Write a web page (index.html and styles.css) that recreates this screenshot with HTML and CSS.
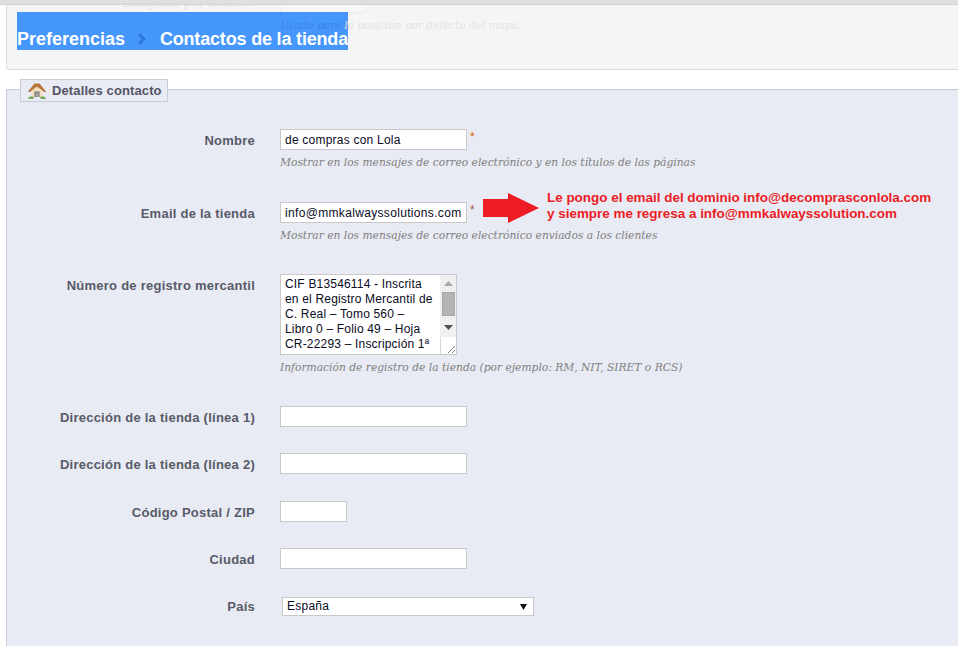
FILE: index.html
```html
<!DOCTYPE html>
<html lang="es">
<head>
<meta charset="utf-8">
<title>Contactos de la tienda</title>
<link rel="stylesheet" href="styles.css">
</head>
<body>
<div class="topstrip"></div>
<header class="head">
  <div class="ghost ghost-a">Longitud por defecto</div>
  <div class="ghost-box"></div>
  <h1 class="crumbs"><span>Preferencias</span><svg class="sep" width="12" height="14" viewBox="0 0 12 14"><path d="M3 2l5 5-5 5" fill="none" stroke="#2f78dc" stroke-width="3"/></svg><span class="crumb-last">Contactos de la tienda</span></h1>
  <div class="ghost ghost-b"><span class="ghost-on">Usado para</span> la posición por defecto del mapa.</div>
</header>
<section class="panel">
  <div class="legend">
    <svg class="home" width="18" height="16" viewBox="0 0 18 16">
      <path d="M3.500 7.500V14h11V7.500L9 3z" fill="#f1dfc0"/>
      <path d="M6.500 8.500h5V14h-5z" fill="#6f6f6f"/>
      <path d="M7.500 9.500h3V14h-3z" fill="#a5a5a5"/>
      <path d="M0 8.500 6.500.5h5L18 8.500l-1.500.8L9 3.500 1.500 9.300z" fill="#b8773a"/>
      <path d="M0 15.800c.8-2 3-2.800 5.500-1.800v1.800zM18 15.800c-.8-2-3-2.800-5.500-1.800v1.800z" fill="#5f9f3f"/>
    </svg>
    <span>Detalles contacto</span>
  </div>
  <form class="form">
    <div class="row row-nombre">
      <label class="lbl">Nombre</label>
      <div class="field">
        <div class="line"><div class="input w187">de compras con Lola</div><i class="req">*</i></div>
        <p class="help">Mostrar en los mensajes de correo electrónico y en los títulos de las páginas</p>
      </div>
    </div>
    <div class="row row-email">
      <label class="lbl">Email de la tienda</label>
      <div class="field">
        <div class="line"><div class="input w187 tight">info@mmkalwayssolutions.com</div><i class="req dark">*</i>
          <svg class="arrow" width="56" height="30" viewBox="0 0 56 30"><path d="M0 6h25V0l31 15-31 15v-6H0z" fill="#ed1c24"/></svg>
          <div class="note">Le pongo el email del dominio info@decomprasconlola.com<br>y siempre me regresa a info@mmkalwayssolution.com</div>
        </div>
        <p class="help">Mostrar en los mensajes de correo electrónico enviados a los clientes</p>
      </div>
    </div>
    <div class="row row-reg">
      <label class="lbl">Número de registro mercantil</label>
      <div class="field">
        <div class="area">
          <div class="area-text">CIF B13546114 - Inscrita<br>en el Registro Mercantil de<br>C. Real – Tomo 560 –<br>Libro 0 – Folio 49 – Hoja<br>CR-22293 – Inscripción 1ª</div>
          <div class="scroll">
            <div class="sb-track">
              <svg class="sb-up" width="9" height="5" viewBox="0 0 9 5"><path d="M4.500 0 9 5H0z" fill="#a8a8a8"/></svg>
              <div class="sb-thumb"></div>
              <svg class="sb-down" width="9" height="5" viewBox="0 0 9 5"><path d="M0 0h9L4.500 5z" fill="#505050"/></svg>
            </div>
            <div class="sb-corner"><svg width="9" height="9" viewBox="0 0 9 9"><path d="M1 8l7-7M5 8l3-3" stroke="#808080" fill="none"/></svg></div>
          </div>
        </div>
        <p class="help">Información de registro de la tienda (por ejemplo: RM, NIT, SIRET o RCS)</p>
      </div>
    </div>
    <div class="row row-plain">
      <label class="lbl">Dirección de la tienda (línea 1)</label>
      <div class="field"><div class="input w187"></div></div>
    </div>
    <div class="row row-plain">
      <label class="lbl">Dirección de la tienda (línea 2)</label>
      <div class="field"><div class="input w187"></div></div>
    </div>
    <div class="row row-plain">
      <label class="lbl">Código Postal / ZIP</label>
      <div class="field"><div class="input w67"></div></div>
    </div>
    <div class="row row-plain">
      <label class="lbl">Ciudad</label>
      <div class="field"><div class="input w187"></div></div>
    </div>
    <div class="row row-select">
      <label class="lbl">País</label>
      <div class="field"><div class="select"><span>España</span><svg width="7" height="7" viewBox="0 0 7 7"><path d="M0 1h7L3.500 7z" fill="#111"/></svg></div></div>
    </div>
  </form>
</section>
</body>
</html>
```

FILE: styles.css
```css
* { box-sizing: border-box; }
html, body { margin: 0; padding: 0; }
body {
  width: 958px;
  height: 646px;
  overflow: hidden;
  background: #fff;
  font-family: "Liberation Sans", Arial, sans-serif;
}
.topstrip { position: relative; z-index: 3; height: 5px; background: #dfdfdf; border-bottom: 1px solid #d2d2d2; }
.head {
  position: relative;
  height: 65px;
  margin-left: 6px;
  background: #f5f5f5;
  border-left: 1px solid #dcdcdc;
  border-bottom: 1px solid #dcdcdc;
  border-bottom-left-radius: 3px;
}
.ghost { position: absolute; font-family: "DejaVu Serif", serif; color: #e6e6e6; font-size: 11px; white-space: nowrap; }
.ghost-a { left: 115px; top: -10px; font-size: 12.500px; }
.ghost-box { position: absolute; left: 273px; top: -5px; width: 87px; height: 13px; border: 1px solid #ededed; background: #f7f7f7; }
.ghost-b { left: 273px; top: 14px; font-size: 10.500px; font-style: italic; color: #e4e4e4; z-index: 2; }
.ghost-on { color: #3c84e6; }
.crumbs {
  position: absolute;
  left: 10px;
  top: 7px;
  height: 38px;
  width: 331px;
  margin: 0;
  padding-top: 16px;
  display: flex;
  align-items: center;
  background: #4596fd;
  color: #fff;
  font-size: 18px;
  font-weight: bold;
  line-height: 22px;
  white-space: nowrap;
}
.crumb-last { letter-spacing: -0.180px; }
.sep { margin: 0 12px 0 11px; }
.panel {
  position: relative;
  margin: 19px 0 0 6px;
  height: 557px;
  background: #e8ebf3;
  border-top: 1px solid #c9ccd6;
  border-left: 1px solid #c9ccd6;
}
.legend {
  position: absolute;
  left: 13px;
  top: -11px;
  width: 148px;
  height: 23px;
  display: flex;
  align-items: center;
  gap: 6px;
  padding-left: 7px;
  background: #e8ebf3;
  border: 1px solid #c9ccd6;
  color: #555566;
  font-size: 13px;
  font-weight: bold;
  letter-spacing: 0.120px;
}
.home { flex: none; }
.form { padding-top: 39px; }
.row { display: grid; grid-template-columns: 248px 1fr; column-gap: 25px; }
.lbl { padding-top: 4px; text-align: right; color: #585a69; font-size: 13px; font-weight: bold; letter-spacing: 0.250px; line-height: 15px; white-space: nowrap; }
.row-nombre { height: 73px; }
.row-email { height: 72px; }
.row-reg { height: 131.900px; }
.row-plain { height: 47.500px; }
.row-select { margin-top: 1px; height: 30px; }
.line { display: flex; align-items: flex-start; }
.input {
  height: 21px;
  background: #fff;
  border: 1px solid #c9c9c9;
  padding: 2px 4px;
  font-size: 12px;
  letter-spacing: 0.220px;
  line-height: 16px;
  color: #0a0a1e;
  white-space: nowrap;
  overflow: hidden;
}
.input.tight { letter-spacing: 0.330px; }
.w187 { width: 187px; }
.w67 { width: 67px; }
.req { margin: 1px 0 0 3px; font-style: normal; font-size: 12px; line-height: 14px; color: #e06000; }
.req.dark { color: #a06030; }
.arrow { position: absolute; left: 476px; top: 103px; }
.note {
  position: absolute;
  left: 540px;
  top: 100px;
  color: #ed1c24;
  font-size: 13.450px;
  font-weight: bold;
  line-height: 16px;
  white-space: nowrap;
}
.help {
  margin: 6px 0 0;
  font-family: "DejaVu Serif", Georgia, serif;
  font-style: italic;
  font-size: 10.700px;
  line-height: 14px;
  color: #7f7f7f;
  white-space: nowrap;
}
.area {
  display: flex;
  width: 177px;
  height: 81px;
  background: #fff;
  border: 1px solid #c9c9c9;
}
.area-text {
  flex: 1;
  height: 79px;
  overflow: hidden;
  padding: 2px 0 0 4px;
  font-size: 12px;
  letter-spacing: 0.180px;
  line-height: 15px;
  color: #0a0a1e;
  white-space: nowrap;
}
.scroll { width: 16px; display: flex; flex-direction: column; flex: none; }
.sb-track { height: 62px; background: #f0f0f0; display: flex; flex-direction: column; align-items: center; padding-top: 6px; }
.sb-thumb { width: 13px; height: 24px; margin-top: 6px; background: #b4b4b4; border: 1px solid #a8a8a8; }
.sb-down { margin-top: 9px; }
.sb-corner { flex: 1; display: flex; align-items: flex-end; justify-content: flex-end; border-left: 1px solid #d8d8d8; background: #fff; }
.select {
  width: 252px;
  height: 19px;
  margin: 0 0 0 2px;
  display: flex;
  align-items: center;
  justify-content: space-between;
  padding: 0 6px 0 4px;
  background: #fff;
  border: 1px solid #c9c9c9;
  font-size: 12px;
  letter-spacing: 0.250px;
  color: #0a0a1e;
}
.row-select .lbl { padding-top: 2px; }
```
